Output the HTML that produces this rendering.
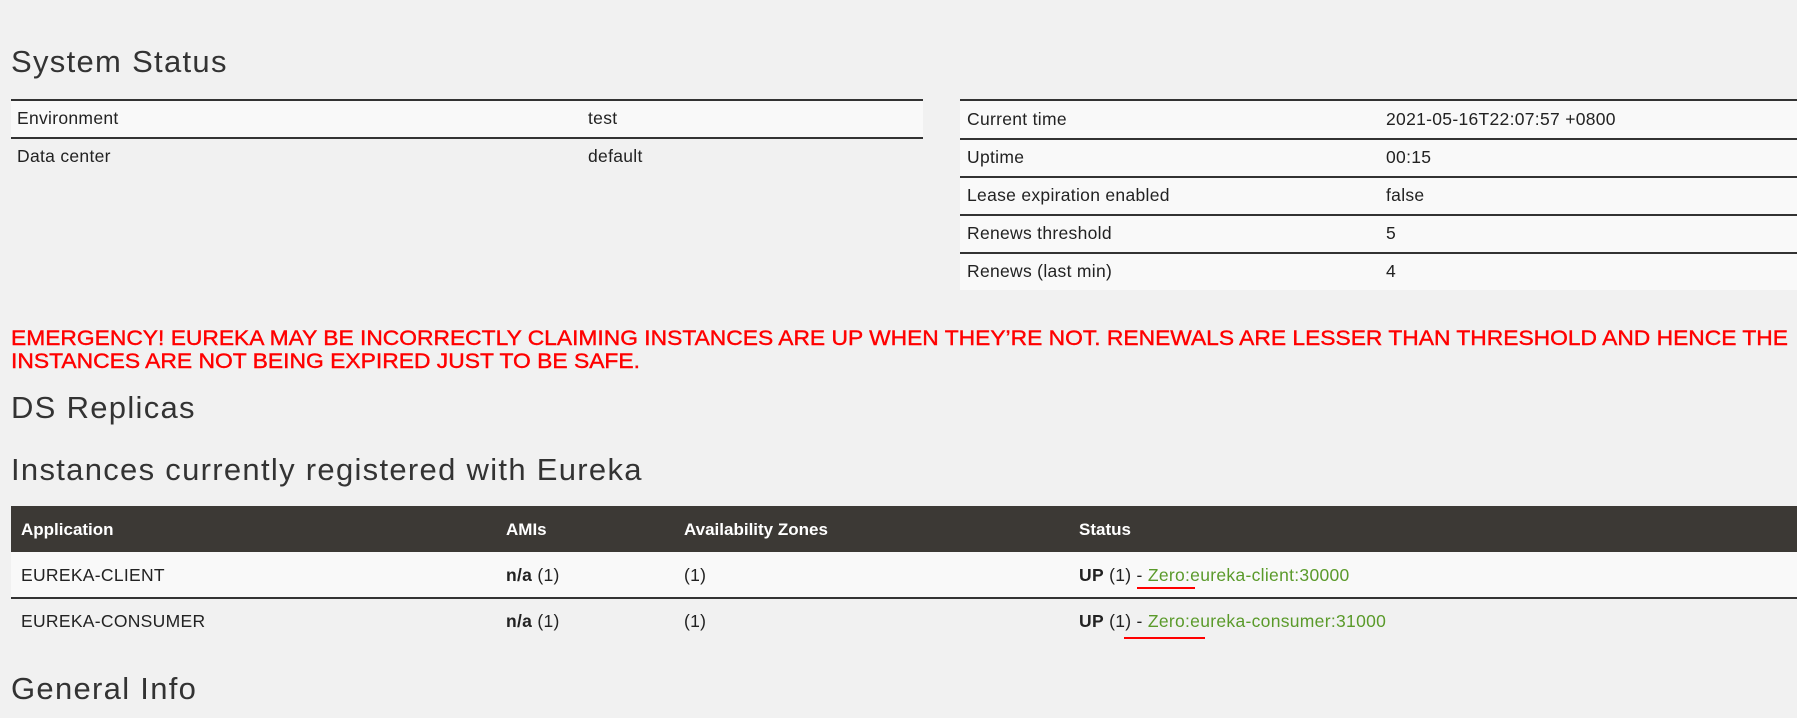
<!DOCTYPE html>
<html><head><meta charset="utf-8"><style>
body{margin:0;width:1797px;height:718px;background:#f1f1f1;font-family:"Liberation Sans",sans-serif;color:#222;position:relative;overflow:hidden}
.a{position:absolute;white-space:nowrap}
h{position:absolute;font-size:31px;color:#333;white-space:nowrap;line-height:1;letter-spacing:1.3px}
.row{position:absolute;background:#f9f9f9}
.ln{position:absolute;height:2px;background:#333}
.t{position:absolute;font-size:17.5px;white-space:nowrap;line-height:1;letter-spacing:0.3px}
.g{color:#5a9a2a}
.th{position:absolute;font-size:17px;font-weight:bold;color:#fff;line-height:1}
</style></head><body>
<h style="left:11px;top:46px">System Status</h>
<div class="row" style="left:11px;top:100px;width:912px;height:38px"></div>
<div class="ln" style="left:11px;top:99px;width:912px"></div>
<div class="ln" style="left:11px;top:137px;width:912px"></div>
<div class="t" style="left:17px;top:110px">Environment</div><div class="t" style="left:588px;top:110px">test</div>
<div class="t" style="left:17px;top:148px">Data center</div><div class="t" style="left:588px;top:148px">default</div>

<div class="row" style="left:960px;top:100px;width:837px;height:190px"></div>
<div class="ln" style="left:960px;top:99px;width:837px"></div>
<div class="ln" style="left:960px;top:138px;width:837px"></div>
<div class="ln" style="left:960px;top:176px;width:837px"></div>
<div class="ln" style="left:960px;top:214px;width:837px"></div>
<div class="ln" style="left:960px;top:252px;width:837px"></div>
<div class="t" style="left:967px;top:111px">Current time</div><div class="t" style="left:1386px;top:111px">2021-05-16T22:07:57 +0800</div>
<div class="t" style="left:967px;top:149px">Uptime</div><div class="t" style="left:1386px;top:149px">00:15</div>
<div class="t" style="left:967px;top:187px">Lease expiration enabled</div><div class="t" style="left:1386px;top:187px">false</div>
<div class="t" style="left:967px;top:225px">Renews threshold</div><div class="t" style="left:1386px;top:225px">5</div>
<div class="t" style="left:967px;top:263px">Renews (last min)</div><div class="t" style="left:1386px;top:263px">4</div>

<svg class="a" style="left:0;top:320px" width="1797" height="60">
<text x="11" y="25" font-family="Liberation Sans" font-size="21" fill="#f00" stroke="#f00" stroke-width="0.4" textLength="1777" lengthAdjust="spacingAndGlyphs">EMERGENCY! EUREKA MAY BE INCORRECTLY CLAIMING INSTANCES ARE UP WHEN THEY’RE NOT. RENEWALS ARE LESSER THAN THRESHOLD AND HENCE THE</text>
<text x="11" y="48" font-family="Liberation Sans" font-size="21" fill="#f00" stroke="#f00" stroke-width="0.4" textLength="629" lengthAdjust="spacingAndGlyphs">INSTANCES ARE NOT BEING EXPIRED JUST TO BE SAFE.</text>
</svg>

<h style="left:11px;top:392px">DS Replicas</h>
<h style="left:11px;top:454px">Instances currently registered with Eureka</h>

<div class="row" style="left:11px;top:506px;width:1786px;height:46px;background:#3c3935"></div>
<div class="th" style="left:21px;top:521px">Application</div>
<div class="th" style="left:506px;top:521px">AMIs</div>
<div class="th" style="left:684px;top:521px">Availability Zones</div>
<div class="th" style="left:1079px;top:521px">Status</div>
<div class="row" style="left:11px;top:552px;width:1786px;height:46px"></div>
<div class="ln" style="left:11px;top:597px;width:1786px;height:1.5px"></div>
<div class="t" style="left:21px;top:567px">EUREKA-CLIENT</div>
<div class="t" style="left:506px;top:567px"><b>n/a</b> (1)</div>
<div class="t" style="left:684px;top:567px">(1)</div>
<div class="t" style="left:1079px;top:567px"><b>UP</b> (1) - <span class="g">Zero:eureka-client:30000</span></div>
<div class="t" style="left:21px;top:613px">EUREKA-CONSUMER</div>
<div class="t" style="left:506px;top:613px"><b>n/a</b> (1)</div>
<div class="t" style="left:684px;top:613px">(1)</div>
<div class="t" style="left:1079px;top:613px"><b>UP</b> (1) - <span class="g">Zero:eureka-consumer:31000</span></div>
<div class="a" style="left:1137px;top:587px;width:58px;height:2px;background:#f00"></div>
<div class="a" style="left:1124px;top:637px;width:81px;height:2px;background:#f00"></div>

<h style="left:11px;top:673px">General Info</h>
</body></html>
